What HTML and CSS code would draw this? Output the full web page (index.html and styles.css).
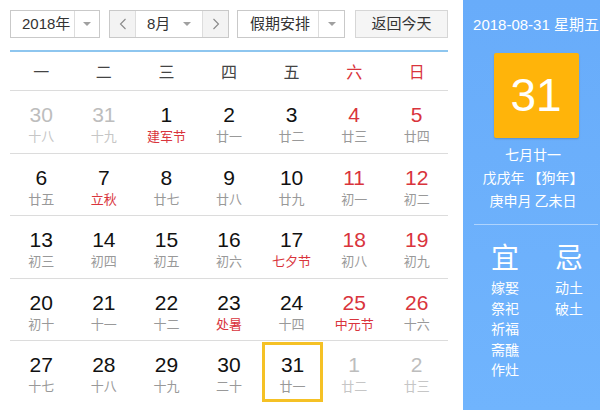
FILE: index.html
```html
<!DOCTYPE html>
<html lang="zh-CN">
<head>
<meta charset="utf-8">
<title>万年历</title>
<link rel="stylesheet" href="styles.css">
</head>
<body>
<div class="app">
  <div class="main">
    <div class="toolbar">
      <div class="select sel-year">
        <span class="sel-text">2018年</span>
        <span class="sel-arrow"><i class="tri"></i></span>
      </div>
      <div class="month-group">
        <span class="nav-btn"><svg width="8" height="12" viewBox="0 0 8 12"><polyline points="6.5,1 1.5,6 6.5,11" fill="none" stroke="#888" stroke-width="1.1"/></svg></span>
        <span class="month-sel"><span class="sel-text">8月</span><i class="tri"></i></span>
        <span class="nav-btn"><svg width="8" height="12" viewBox="0 0 8 12"><polyline points="1.5,1 6.5,6 1.5,11" fill="none" stroke="#888" stroke-width="1.1"/></svg></span>
      </div>
      <div class="select sel-holiday">
        <span class="sel-text">假期安排</span>
        <span class="sel-arrow"><i class="tri"></i></span>
      </div>
      <div class="today-btn">返回今天</div>
    </div>

    <div class="calendar">
      <div class="week-head">
        <span>一</span><span>二</span><span>三</span><span>四</span><span>五</span><span class="red">六</span><span class="red">日</span>
      </div>
      <div class="row">
        <div class="cell other"><b>30</b><em>十八</em></div>
        <div class="cell other"><b>31</b><em>十九</em></div>
        <div class="cell"><b>1</b><em class="fest">建军节</em></div>
        <div class="cell"><b>2</b><em>廿一</em></div>
        <div class="cell"><b>3</b><em>廿二</em></div>
        <div class="cell wk"><b>4</b><em>廿三</em></div>
        <div class="cell wk"><b>5</b><em>廿四</em></div>
      </div>
      <div class="row">
        <div class="cell"><b>6</b><em>廿五</em></div>
        <div class="cell"><b>7</b><em class="fest">立秋</em></div>
        <div class="cell"><b>8</b><em>廿七</em></div>
        <div class="cell"><b>9</b><em>廿八</em></div>
        <div class="cell"><b>10</b><em>廿九</em></div>
        <div class="cell wk"><b>11</b><em>初一</em></div>
        <div class="cell wk"><b>12</b><em>初二</em></div>
      </div>
      <div class="row">
        <div class="cell"><b>13</b><em>初三</em></div>
        <div class="cell"><b>14</b><em>初四</em></div>
        <div class="cell"><b>15</b><em>初五</em></div>
        <div class="cell"><b>16</b><em>初六</em></div>
        <div class="cell"><b>17</b><em class="fest">七夕节</em></div>
        <div class="cell wk"><b>18</b><em>初八</em></div>
        <div class="cell wk"><b>19</b><em>初九</em></div>
      </div>
      <div class="row">
        <div class="cell"><b>20</b><em>初十</em></div>
        <div class="cell"><b>21</b><em>十一</em></div>
        <div class="cell"><b>22</b><em>十二</em></div>
        <div class="cell"><b>23</b><em class="fest">处暑</em></div>
        <div class="cell"><b>24</b><em>十四</em></div>
        <div class="cell wk"><b>25</b><em class="fest">中元节</em></div>
        <div class="cell wk"><b>26</b><em>十六</em></div>
      </div>
      <div class="row last">
        <div class="cell"><b>27</b><em>十七</em></div>
        <div class="cell"><b>28</b><em>十八</em></div>
        <div class="cell"><b>29</b><em>十九</em></div>
        <div class="cell"><b>30</b><em>二十</em></div>
        <div class="cell today"><b>31</b><em>廿一</em></div>
        <div class="cell other"><b>1</b><em>廿二</em></div>
        <div class="cell other"><b>2</b><em>廿三</em></div>
      </div>
    </div>
  </div>

  <div class="panel">
    <div class="p-date">2018-08-31 星期五</div>
    <div class="p-day">31</div>
    <div class="p-lunar">
      <div>七月廿一</div>
      <div>戊戌年 【狗年】</div>
      <div>庚申月 乙未日</div>
    </div>
    <div class="p-sep"></div>
    <div class="yiji">
      <div class="yj-col">
        <div class="yj-title">宜</div>
        <div>嫁娶</div><div>祭祀</div><div>祈福</div><div>斋醮</div><div>作灶</div>
      </div>
      <div class="yj-col">
        <div class="yj-title">忌</div>
        <div>动土</div><div>破土</div>
      </div>
    </div>
  </div>
</div>
</body>
</html>
```
FILE: styles.css
```css
* { box-sizing: border-box; }
html, body { margin: 0; padding: 0; }
body {
  width: 600px;
  height: 410px;
  overflow: hidden;
  background: #fff;
  font-family: "Liberation Sans", "Noto Sans CJK SC", sans-serif;
  color: #333;
}
.app { display: flex; height: 410px; }

.main {
  width: 463px;
  padding: 10px 15px 0 10px;
  flex: none;
}

/* toolbar */
.toolbar {
  display: flex;
  height: 28px;
  font-size: 15px;
  color: #333;
}
.select {
  display: flex;
  border: 1px solid #c9c9c9;
  background: #fff;
  height: 28px;
}
.sel-text { line-height: 26px; }
.sel-year { width: 90px; }
.sel-year .sel-text { width: 63px; padding-left: 11px; }
.sel-holiday { width: 108px; margin-left: 8px; }
.sel-holiday .sel-text { width: 80px; padding-left: 12px; }
.sel-arrow {
  flex: 1;
  border-left: 1px solid #ddd;
  display: flex;
  align-items: center;
  justify-content: center;
}
.tri {
  display: block;
  width: 0; height: 0;
  border-left: 4px solid transparent;
  border-right: 4px solid transparent;
  border-top: 4px solid #a0a0a0;
}
.month-group {
  display: flex;
  width: 120px;
  height: 28px;
  margin-left: 9px;
  border: 1px solid #c9c9c9;
}
.nav-btn {
  width: 26px;
  background: #f3f3f3;
  display: flex;
  align-items: center;
  justify-content: center;
}
.nav-btn:first-child { border-right: 1px solid #ddd; }
.nav-btn:last-child { border-left: 1px solid #ddd; }
.month-sel {
  flex: 1;
  display: flex;
  align-items: center;
  padding-left: 11px;
  background: #fff;
}
.month-sel .sel-text { width: 36px; }
.today-btn {
  margin-left: 10px;
  width: 93px;
  height: 28px;
  border: 1px solid #d6d6d6;
  background: #f5f5f5;
  text-align: center;
  line-height: 26px;
}

/* calendar */
.calendar {
  margin-top: 12px;
  border-top: 2px solid #8ec6ef;
}
.week-head {
  display: grid;
  grid-template-columns: repeat(7, 1fr);
  height: 39px;
  border-bottom: 1px solid #dcdcdc;
  font-family: "Noto Sans CJK SC", sans-serif;
  font-size: 16px;
  color: #444;
  text-align: center;
  line-height: 38px;
}
.red { color: #d9343c; }
.row {
  display: grid;
  grid-template-columns: repeat(7, 1fr);
  height: 62.5px;
  border-bottom: 1px solid #dcdcdc;
}
.row.last { border-bottom: none; }
.cell {
  display: flex;
  flex-direction: column;
  align-items: center;
  padding-top: 12px;
}
.cell b {
  font-weight: normal;
  font-size: 21px;
  line-height: 24px;
  color: #111;
}
.cell em {
  font-style: normal;
  font-family: "Noto Sans CJK SC", sans-serif;
  font-size: 13px;
  line-height: 18px;
  color: #999;
}
.cell.wk b { color: #d9343c; }
.cell em.fest { color: #d9343c; }
.cell.other b { color: #bdbdbd; }
.cell.other em { color: #c6c6c6; }
.cell.today {
  box-shadow: inset 0 0 0 3px #f5c125;
  margin: 1px 0 0 2px;
  height: 60px;
  padding-top: 11px;
}

/* right panel */
.panel {
  flex: 1;
  background: linear-gradient(#68acfa, #70b4fd);
  color: #fff;
  display: flex;
  flex-direction: column;
  align-items: center;
  padding-left: 8px;
  font-family: "Liberation Sans", "Noto Sans CJK SC", sans-serif;
}
.p-date {
  margin-top: 15px;
  font-size: 15px;
  line-height: 20px;
  white-space: nowrap;
}
.p-day {
  margin-top: 18px;
  width: 85px;
  height: 85px;
  background: #ffb40a;
  border-radius: 2px;
  box-shadow: 0 1px 2px rgba(0, 0, 0, 0.18);
  font-size: 46px;
  line-height: 85px;
  text-align: center;
}
.p-lunar {
  margin-top: 5px;
  font-family: "Noto Sans CJK SC", sans-serif;
  font-size: 14px;
  line-height: 23px;
  text-align: center;
  margin-left: -6px;
}
.p-sep {
  width: 124px;
  height: 1px;
  background: rgba(255, 255, 255, 0.45);
  margin-top: 12px;
}
.yiji {
  align-self: stretch;
  margin-left: 2px;
  display: grid;
  grid-template-columns: 64px 64px;
  font-family: "Noto Sans CJK SC", sans-serif;
  font-size: 14px;
  line-height: 20.5px;
  text-align: center;
  margin-top: 13px;
}
.yj-title {
  font-size: 28px;
  line-height: 36px;
  margin-bottom: 3px;
}
```
